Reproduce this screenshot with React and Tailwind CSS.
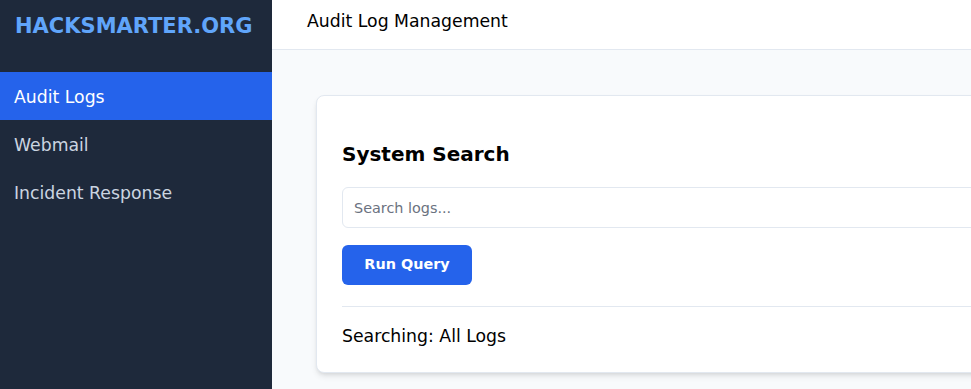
export default function App() {
  const nav = ['Audit Logs', 'Webmail', 'Incident Response'];
  return (
    <div className="flex h-screen w-screen overflow-hidden bg-[#f8fafc] font-['DejaVu_Sans',sans-serif]">
      <aside className="w-[272px] shrink-0 bg-[#1e293b]">
        <div className="h-[72px] px-[15px] pt-[12px] text-[21px] font-bold leading-[28px] text-[#60a5fa]">
          HACKSMARTER.ORG
        </div>
        <nav>
          {nav.map((item, i) => (
            <div
              key={item}
              className={`flex h-12 items-center px-[14px] pt-[2px] text-[17.28px] leading-[26px] ${i === 0 ? 'bg-[#2563eb] text-white' : 'text-[#cbd5e1]'}`}
            >
              {item}
            </div>
          ))}
        </nav>
      </aside>

      <div className="flex min-w-0 flex-1 flex-col">
        <header className="h-[50px] shrink-0 border-b border-[#e2e8f0] bg-white px-[35px] pt-[8px] text-[17.28px] leading-[26px] text-black">
          Audit Log Management
        </header>
        <main className="pl-[44px] pt-[45px]">
          <div className="w-[900px] rounded-lg border border-[#e2e8f0] bg-white px-[25px] pb-[22px] pt-[44px] shadow-md">
            <h2 className="text-[20px] font-bold leading-[28px] text-black">System Search</h2>
            <input
              type="text"
              placeholder="Search logs..."
              className="mt-[19px] block h-[41px] w-full rounded-md border border-[#e2e8f0] px-[11px] text-[14.4px] outline-none placeholder:text-[#6b7280]"
            />
            <button className="mt-[17px] h-[40px] w-[130px] rounded-md bg-[#2563eb] text-[14.4px] font-bold text-white">
              Run Query
            </button>
            <div className="mt-[21px] border-t border-[#e2e8f0] pt-[16px] text-[17.28px] leading-[27px] text-black">
              Searching: All Logs
            </div>
          </div>
        </main>
      </div>
    </div>
  );
}
